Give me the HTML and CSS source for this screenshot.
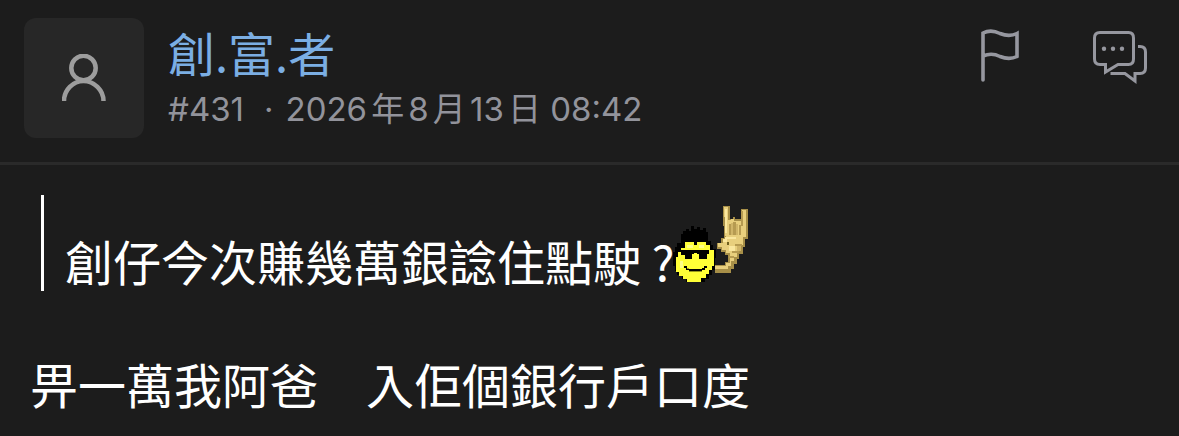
FILE: index.html
```html
<!DOCTYPE html>
<html lang="zh-HK">
<head>
    <meta charset="UTF-8">
    <meta name="viewport" content="width=device-width, initial-scale=1.0">
    <title>創.富.者 #431</title>
    <link rel="stylesheet" href="styles.css">
</head>
<body>
    <article class="post">
        <header class="post-header">
            <div class="avatar">
                <svg width="44" height="48" viewBox="0 0 44 48" fill="none" stroke="#9d9d9d" stroke-width="4.500">
                    <circle cx="21.500" cy="14" r="12.200"/>
                    <path d="M2 47C2 36 11 27 21.500 27s20 9 20 20"/>
                </svg>
            </div>
            <div class="post-info">
                <a class="username" href="#">創.富.者</a>
                <div class="meta">
                    <span>#431</span>
                    <span class="dot">·</span>
                    <time datetime="2026-08-13T08:42">2026年8月13日 08:42</time>
                </div>
            </div>
            <div class="actions">
                <button type="button" aria-label="舉報">
                    <svg width="42" height="58" viewBox="0 -2 42 58" fill="none" stroke="#96979f" stroke-width="3.600" stroke-linecap="round">
                        <path d="M4 52V5C10 2 16 3 21 5.500C27 8 33 8 38 5.500V28.500C33 31 27 31 21 28.500C16 26 10 25.500 4 28"/>
                    </svg>
                </button>
                <button type="button" aria-label="回覆">
                    <svg width="60" height="60" viewBox="0 -3 60 60" fill="none" stroke="#96979f" stroke-width="3">
                        <path d="M9 3.500H37.500Q42.500 3.500 42.500 9V30Q42.500 35.500 37.500 35.500H27L14.500 43V35.500H9Q3.500 35.500 3.500 30V9Q3.500 3.500 9 3.500Z"/>
                        <path d="M47 17.500H49Q54.500 17.500 54.500 23V39Q54.500 44.500 49 44.500H44V52L34 44.500H19.500"/>
                        <g fill="#96979f" stroke="none">
                            <circle cx="13" cy="19.700" r="2.200"/>
                            <circle cx="22" cy="19.700" r="2.200"/>
                            <circle cx="31" cy="19.700" r="2.200"/>
                        </g>
                    </svg>
                </button>
            </div>
        </header>
        <div class="post-body">
            <blockquote class="quote">創仔今次賺幾萬銀諗住點駛 ?<svg class="emoji" width="76" height="84" viewBox="47 36 228 252" shape-rendering="crispEdges">
                <!-- hand -->
                <path fill="#a78f48" d="M190 42h22v38h8v-6h8v8h16V50h22v92h-8v24h-8v20h-10v14h-8v16h-8v16h-10v10h-48v-22h32v-10h8v-20h-8v-10h-12v-10h-14v-18h14v-14h8z"/>
                <path fill="#e8cf7d" d="M194 46h13v38h8v-4h8v8h24V54h12v82h-8v24h-8v18h-10v16h-8v14h-10v14h-10v10h-38v-10h34v-10h10v-28h-12v-10h-12v-8h-10v-12h14v-14h8z"/>
                <path fill="#b69b51" d="M208 96h6v32h-6zM222 90h7v38h-7zM238 98h6v32h-6zM246 58h5v44h-5zM228 156h20v6h-20zM218 178h22v6h-22zM208 192h16v5h-16z"/>
                <path fill="#d0b568" d="M215 94h7v36h-7zM230 96h7v34h-7zM234 162h10v16h-10z"/>
                <path fill="#fae79e" d="M196 50h6v74h-6zM196 134h34v8h-34zM190 142h14v8h-14zM208 162h18v14h-18z"/>
                <path fill="#706020" d="M202 150h8v9h-8z"/>
                <!-- hair and outline -->
                <path fill="#000" d="M65 126h5v-10h10v-6h10v6h6v-13h8v8h8v-6h10v9h10v-6h8v12h6v26h8v12h8v14h8v26h-4v36h-8v14h-10v12h-12v10H81v-8H67v-12H54v-12h-8v-16h-6v-42h6v-16h8v-12h11z"/>
                <path fill="#ffff37" d="M78 151h26v8h10v-8h26v8h12v16h12v48h-6v12h-8v12h-10v12h-14v10H84v-8H70v-10H58v-12h-8v-44h6v-16h10v-12h12z"/>
                <path fill="#ffff85" d="M82 159h18v8h18v-8h16v8H82zM62 207h8v20h-8z"/>
                <!-- sunglasses and mouth -->
                <path fill="#000" d="M64 175h84v12h-6v14h-24v-14h-6v-4h-8v4h-5v14H76v-12H64zM74 222h8v6h8v6h-10v-5h-6zM90 230h38v8H90zM128 228h6v-6h8v7h-5v6h-9z"/>
                <path fill="#99991c" d="M82 228h8v3h-8zM90 238h38v3H90z"/>
            </svg></blockquote>
            <p class="text">畀一萬我阿爸　入佢個銀行戶口度</p>
        </div>
    </article>
</body>
</html>
```

FILE: styles.css
```css
* {
    box-sizing: border-box;
}
body {
    margin: 0;
    background-color: #1c1c1c;
    color: #fff;
    font-family: "Noto Sans CJK TC", sans-serif;
}
.post-header {
    display: flex;
    align-items: flex-start;
    padding: 18px 28px 0 24px;
    border-bottom: 3px solid #2a2a2a;
}
.avatar {
    display: flex;
    align-items: center;
    justify-content: center;
    width: 120px;
    height: 120px;
    margin-bottom: 24px;
    border-radius: 12px;
    background-color: #272727;
}
.post-info {
    flex: 1;
    padding: 4px 0 0 24px;
}
.username {
    display: block;
    color: #7baee3;
    font-size: 47px;
    line-height: 60px;
    text-decoration: none;
}
.meta {
    display: flex;
    color: #92939b;
    font-family: Inter, "Noto Sans CJK TC", sans-serif;
    font-size: 33px;
    line-height: 54px;
    text-autospace: normal;
}
.dot {
    padding: 0 12px 0 20px;
}
.actions {
    display: flex;
    align-items: flex-start;
    gap: 70px;
    padding-top: 8px;
}
.actions button {
    padding: 0;
    border: none;
    background: none;
    cursor: pointer;
}
.actions svg {
    display: block;
}
.post-body {
    padding: 30px 30px 0;
}
.quote {
    margin: 0 0 0 11px;
    padding: 9px 0 0 21px;
    border-left: 3px solid #fff;
    font-size: 48px;
    line-height: 62px;
}
.emoji {
    overflow: visible;
    vertical-align: -7px;
}
.text {
    margin: 56px 0 0;
    font-size: 48px;
    line-height: 72px;
}
```
